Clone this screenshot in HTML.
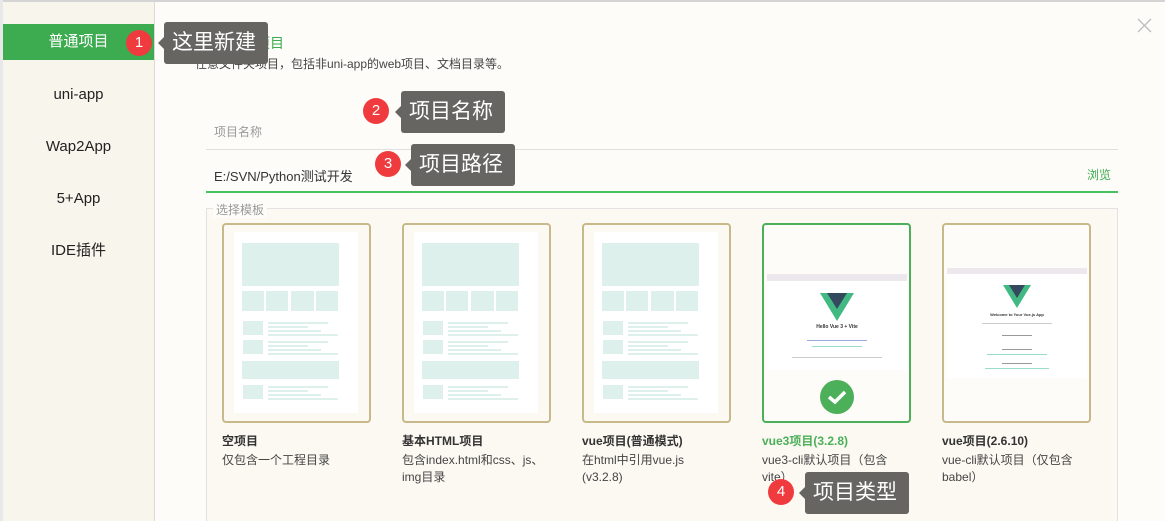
<!DOCTYPE html>
<html><head><meta charset="utf-8"><style>
*{margin:0;padding:0;box-sizing:border-box}
body{width:1165px;height:521px;overflow:hidden;background:#fdfcf8;font-family:"Liberation Sans","Noto Sans CJK SC",sans-serif;position:relative}
.abs{position:absolute}
.side{left:3px;top:2px;width:152px;height:519px;background:#f7f5ec;border-right:1px solid #dcdad2}
.item{position:absolute;left:0;width:151px;text-align:center;font-size:15px;color:#222;line-height:36px}
.card{position:absolute;top:223px;width:149px;height:200px;border:2px solid #c8b98a;border-radius:4px}
.inner{position:absolute;left:10px;top:7px;width:124px;height:181px;background:#fff}
.b{position:absolute;background:#def0eb}
.l{position:absolute;height:2px;background:#def0eb}
.t{position:absolute;top:432px;font-size:12px;font-weight:bold;color:#333}
.d{position:absolute;top:452px;font-size:12px;color:#444;line-height:17px;width:152px}
.badge{position:absolute;width:26px;height:26px;border-radius:50%;background:#ef3b3e;color:#fff;font-size:15px;text-align:center;line-height:26px}
.tip{position:absolute;height:42px;background:#666562;color:#fff;font-size:21px;line-height:42px;padding-left:8px;border-radius:3px}
.tip:before{content:"";position:absolute;left:-6px;top:15px;border-right:6px solid #666562;border-top:6px solid transparent;border-bottom:6px solid transparent}
</style></head><body>
<div class="abs" style="left:0;top:0;width:1165px;height:2px;background:#d4d4d4"></div>
<div class="abs" style="left:0;top:0;width:3px;height:521px;background:#e8e8e8"></div>
<div class="abs side">
<div class="item" style="top:22px;background:#3dab50;color:#fff">普通项目</div>
<div class="item" style="top:75px">uni-app</div>
<div class="item" style="top:127px">Wap2App</div>
<div class="item" style="top:179px">5+App</div>
<div class="item" style="top:231px">IDE插件</div>
</div>
<div class="abs" style="left:228px;top:33px;font-size:14px;color:#3dab50">普通项目</div>
<div class="abs" style="left:195px;top:55px;font-size:12px;color:#444">任意文件夹项目，包括非uni-app的web项目、文档目录等。</div>
<div class="abs" style="left:214px;top:123px;font-size:12px;color:#999">项目名称</div>
<div class="abs" style="left:206px;top:149px;width:912px;height:1px;background:#e0e0dc"></div>
<div class="abs" style="left:214px;top:166px;font-size:13px;color:#333">E:/SVN/Python测试开发</div>
<div class="abs" style="left:1087px;top:166px;font-size:12px;color:#3dab50">浏览</div>
<div class="abs" style="left:206px;top:191px;width:912px;height:2px;background:#45c161"></div>
<div class="abs" style="left:206px;top:208px;width:912px;height:313px;border:1px solid #e2e2e2;border-bottom:none;background:#fbf9f2"></div>
<div class="abs" style="left:213px;top:201px;font-size:12px;color:#999;background:#fdfcf8;padding:0 3px">选择模板</div>
<svg class="abs" style="left:1137px;top:18px" width="15" height="15"><path d="M1 1L14 14M14 1L1 14" stroke="#bbb" stroke-width="1.3"/></svg>

<div class="card" style="left:222px"><div class="inner">
<div class="b" style="left:8px;top:11px;width:97px;height:43px"></div>
<div class="b" style="left:8px;top:59px;width:22px;height:20px"></div><div class="b" style="left:32px;top:59px;width:22px;height:20px"></div><div class="b" style="left:57px;top:59px;width:23px;height:20px"></div><div class="b" style="left:82px;top:59px;width:22px;height:20px"></div>
<div class="b" style="left:9px;top:89px;width:20px;height:14px"></div><div class="l" style="left:34px;top:90px;width:60px"></div><div class="l" style="left:34px;top:94px;width:40px"></div><div class="l" style="left:34px;top:98px;width:53px"></div><div class="l" style="left:34px;top:102px;width:70px"></div>
<div class="b" style="left:9px;top:108px;width:20px;height:14px"></div><div class="l" style="left:34px;top:109px;width:60px"></div><div class="l" style="left:34px;top:113px;width:40px"></div><div class="l" style="left:34px;top:117px;width:53px"></div><div class="l" style="left:34px;top:121px;width:70px"></div>
<div class="b" style="left:8px;top:129px;width:97px;height:18px"></div>
<div class="b" style="left:9px;top:153px;width:20px;height:14px"></div><div class="l" style="left:34px;top:154px;width:60px"></div><div class="l" style="left:34px;top:158px;width:40px"></div><div class="l" style="left:34px;top:162px;width:53px"></div><div class="l" style="left:34px;top:166px;width:70px"></div>
</div></div>
<div class="card" style="left:402px"><div class="inner">
<div class="b" style="left:8px;top:11px;width:97px;height:43px"></div>
<div class="b" style="left:8px;top:59px;width:22px;height:20px"></div><div class="b" style="left:32px;top:59px;width:22px;height:20px"></div><div class="b" style="left:57px;top:59px;width:23px;height:20px"></div><div class="b" style="left:82px;top:59px;width:22px;height:20px"></div>
<div class="b" style="left:9px;top:89px;width:20px;height:14px"></div><div class="l" style="left:34px;top:90px;width:60px"></div><div class="l" style="left:34px;top:94px;width:40px"></div><div class="l" style="left:34px;top:98px;width:53px"></div><div class="l" style="left:34px;top:102px;width:70px"></div>
<div class="b" style="left:9px;top:108px;width:20px;height:14px"></div><div class="l" style="left:34px;top:109px;width:60px"></div><div class="l" style="left:34px;top:113px;width:40px"></div><div class="l" style="left:34px;top:117px;width:53px"></div><div class="l" style="left:34px;top:121px;width:70px"></div>
<div class="b" style="left:8px;top:129px;width:97px;height:18px"></div>
<div class="b" style="left:9px;top:153px;width:20px;height:14px"></div><div class="l" style="left:34px;top:154px;width:60px"></div><div class="l" style="left:34px;top:158px;width:40px"></div><div class="l" style="left:34px;top:162px;width:53px"></div><div class="l" style="left:34px;top:166px;width:70px"></div>
</div></div>
<div class="card" style="left:582px"><div class="inner">
<div class="b" style="left:8px;top:11px;width:97px;height:43px"></div>
<div class="b" style="left:8px;top:59px;width:22px;height:20px"></div><div class="b" style="left:32px;top:59px;width:22px;height:20px"></div><div class="b" style="left:57px;top:59px;width:23px;height:20px"></div><div class="b" style="left:82px;top:59px;width:22px;height:20px"></div>
<div class="b" style="left:9px;top:89px;width:20px;height:14px"></div><div class="l" style="left:34px;top:90px;width:60px"></div><div class="l" style="left:34px;top:94px;width:40px"></div><div class="l" style="left:34px;top:98px;width:53px"></div><div class="l" style="left:34px;top:102px;width:70px"></div>
<div class="b" style="left:9px;top:108px;width:20px;height:14px"></div><div class="l" style="left:34px;top:109px;width:60px"></div><div class="l" style="left:34px;top:113px;width:40px"></div><div class="l" style="left:34px;top:117px;width:53px"></div><div class="l" style="left:34px;top:121px;width:70px"></div>
<div class="b" style="left:8px;top:129px;width:97px;height:18px"></div>
<div class="b" style="left:9px;top:153px;width:20px;height:14px"></div><div class="l" style="left:34px;top:154px;width:60px"></div><div class="l" style="left:34px;top:158px;width:40px"></div><div class="l" style="left:34px;top:162px;width:53px"></div><div class="l" style="left:34px;top:166px;width:70px"></div>
</div></div>
<div class="card" style="left:762px;border-color:#4caf5a;background:#fdfcf8">
<div class="abs" style="left:3px;top:49px;width:140px;height:96px;background:#fff">
<div style="height:7px;background:#ede8ee"></div>
<svg class="abs" style="left:53px;top:19px" width="34" height="28"><path d="M0 0H34L17 28Z" fill="#42b883"/><path d="M7 0H27L17 16Z" fill="#35495e"/></svg>
<div class="abs" style="left:0;top:50px;width:140px;text-align:center;font-size:5px;font-weight:bold;color:#333">Hello Vue 3 + Vite</div>
<div class="abs" style="left:40px;top:66px;width:60px;height:1px;background:#9ad"></div>
<div class="abs" style="left:45px;top:72px;width:50px;height:1px;background:#9dc"></div>
<div class="abs" style="left:25px;top:83px;width:90px;height:1px;background:#ccc"></div>
</div>
<div class="abs" style="left:56px;top:155px;width:34px;height:34px;border-radius:50%;background:#4caf5a"></div>
<svg class="abs" style="left:63px;top:164px" width="20" height="16"><path d="M2 8L8 13L18 3" stroke="#fff" stroke-width="3.5" fill="none"/></svg>
</div>
<div class="card" style="left:942px;background:#fdfcf8">
<div class="abs" style="left:3px;top:43px;width:140px;height:110px;background:#fff">
<div style="height:6px;background:#ede8ee"></div>
<svg class="abs" style="left:56px;top:17px" width="28" height="23"><path d="M0 0H28L14 23Z" fill="#42b883"/><path d="M6 0H22L14 13Z" fill="#35495e"/></svg>
<div class="abs" style="left:0;top:44px;width:140px;text-align:center;font-size:4px;font-weight:bold;color:#333">Welcome to Your Vue.js App</div>
<div class="abs" style="left:35px;top:55px;width:70px;height:1px;background:#ccc"></div>
<div class="abs" style="left:55px;top:67px;width:30px;height:1px;background:#999"></div>
<div class="abs" style="left:55px;top:81px;width:30px;height:1px;background:#999"></div>
<div class="abs" style="left:40px;top:86px;width:60px;height:1px;background:#9dc"></div>
<div class="abs" style="left:55px;top:95px;width:30px;height:1px;background:#999"></div>
<div class="abs" style="left:38px;top:100px;width:64px;height:1px;background:#9dc"></div>
</div>
</div>

<div class="t" style="left:222px">空项目</div><div class="d" style="left:222px">仅包含一个工程目录</div>
<div class="t" style="left:402px">基本HTML项目</div><div class="d" style="left:402px">包含index.html和css、js、img目录</div>
<div class="t" style="left:582px">vue项目(普通模式)</div><div class="d" style="left:582px;width:140px">在html中引用vue.js (v3.2.8)</div>
<div class="t" style="left:762px;color:#4caf5a">vue3项目(3.2.8)</div><div class="d" style="left:762px;width:140px">vue3-cli默认项目（包含vite）</div>
<div class="t" style="left:942px">vue项目(2.6.10)</div><div class="d" style="left:942px;width:140px">vue-cli默认项目（仅包含babel）</div>

<div class="badge" style="left:126px;top:30px">1</div><div class="tip" style="left:164px;top:22px;width:104px">这里新建</div>
<div class="badge" style="left:363px;top:98px">2</div><div class="tip" style="left:401px;top:91px;width:104px">项目名称</div>
<div class="badge" style="left:375px;top:151px">3</div><div class="tip" style="left:411px;top:144px;width:104px">项目路径</div>
<div class="badge" style="left:768px;top:479px">4</div><div class="tip" style="left:805px;top:472px;width:104px">项目类型</div>
</body></html>
